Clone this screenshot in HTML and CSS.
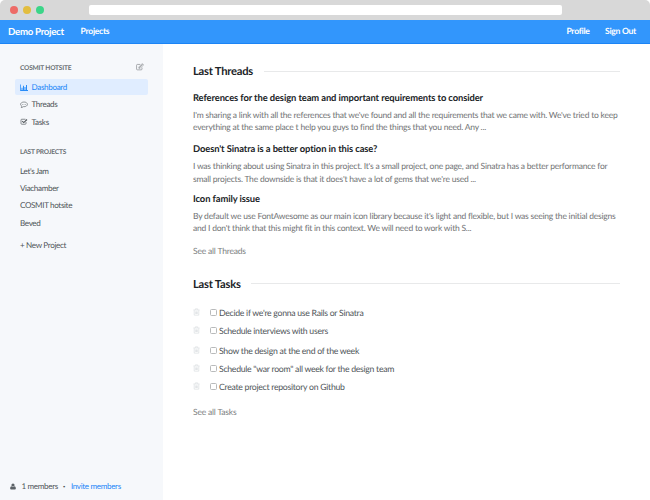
FILE: index.html
```html
<!DOCTYPE html>
<html lang="en">
<head>
<meta charset="utf-8">
<title>Demo Project</title>
<link rel="stylesheet" href="styles.css">
</head>
<body>
<div class="window">
  <div class="chrome">
    <i class="dot red"></i><i class="dot yellow"></i><i class="dot green"></i>
    <div class="address"></div>
  </div>
  <header class="topbar">
    <a class="brand">Demo Project</a>
    <a class="nav-link">Projects</a>
    <a class="nav-link push">Profile</a>
    <a class="nav-link signout">Sign Out</a>
  </header>
  <div class="body">
    <aside class="sidebar">
      <div class="side-head"><h3>COSMIT HOTSITE</h3>
        <svg class="edit" viewBox="0 0 14 14"><path d="M10.5 8v2.5a1.5 1.5 0 0 1-1.5 1.5H2.5A1.5 1.5 0 0 1 1 10.500V4a1.500 1.500 0 0 1 1.500-1.500H7.500M5.500 8.500L11.800 2.200" fill="none" stroke="currentColor" stroke-width="1.200"/><path d="M5 9.300V7L11 1l2.300 2.300-6 6z" fill="none" stroke="currentColor"/></svg>
      </div>
      <ul class="menu">
        <li class="active"><svg viewBox="0 0 16 14"><path d="M.5 1v12H16M4 12V7.500M7 12V3.500M10 12V6M13 12V2" fill="none" stroke="currentColor" stroke-width="1.900"/></svg>Dashboard</li>
        <li><svg viewBox="0 0 16 14"><path d="M8 2c3.900 0 6.800 2 6.800 4.700S11.900 11.400 8 11.400l-1.200-.1C5.500 12.500 4 13 2.500 13.200c.8-.8 1.200-1.600 1.300-2.600C2.200 9.800 1.200 8.400 1.200 6.700 1.200 4 4.100 2 8 2z" fill="none" stroke="currentColor" stroke-width="1.200"/><circle cx="5" cy="6.700" r=".9" fill="currentColor"/><circle cx="8" cy="6.700" r=".9" fill="currentColor"/><circle cx="11" cy="6.700" r=".9" fill="currentColor"/></svg>Threads</li>
        <li><svg viewBox="0 0 16 14"><path d="M12 8v3a1.500 1.500 0 0 1-1.500 1.500H3.500A1.500 1.500 0 0 1 2 11V4a1.500 1.500 0 0 1 1.500-1.500H11" fill="none" stroke="currentColor" stroke-width="1.300"/><path d="M4.500 6.200l3 3L14 3" fill="none" stroke="currentColor" stroke-width="2.200"/></svg>Tasks</li>
      </ul>
      <h3 class="projects-title">LAST PROJECTS</h3>
      <ul class="projects">
        <li>Let's Jam</li><li>Viachamber</li><li>COSMIT hotsite</li><li>Beved</li>
      </ul>
      <a class="new-project">+ New Project</a>
      <footer class="members">
        <svg viewBox="0 0 12 14"><circle cx="6" cy="4" r="3.200"/><path d="M3 6.500C1 7 .3 9 .3 11c0 1.300.7 2 1.900 2h7.600c1.200 0 1.900-.7 1.900-2 0-2-.7-4-2.700-4.500-1.600 1.600-4.400 1.600-6 0z"/></svg>
        <span>1 members</span><span class="sep">·</span><a>Invite members</a>
      </footer>
    </aside>
    <main class="content">
      <h2>Last Threads</h2>
      <article class="thread t1"><h4>References for the design team and important requirements to consider</h4>
        <p>I'm sharing a link with all the references that we've found and all the requirements that we came with. We've tried to keep<br>everything at the same place t help you guys to find the things that you need. Any ...</p></article>
      <article class="thread t2"><h4>Doesn't Sinatra is a better option in this case?</h4>
        <p>I was thinking about using Sinatra in this project. It's a small project, one page, and Sinatra has a better performance for<br>small projects. The downside is that it does't have a lot of gems that we're used ...</p></article>
      <article class="thread t3"><h4>Icon family issue</h4>
        <p>By default we use FontAwesome as our main icon library because it's light and flexible, but I was seeing the initial designs<br>and I don't think that this might fit in this context. We will need to work with S...</p></article>
      <a class="see-all">See all Threads</a>
      <h2 class="tasks-title">Last Tasks</h2>
      <ul class="tasks">
        <li><svg viewBox="0 0 12 14"><path d="M.5 3.500h11M4 3V1.500h4V3M2 4v8.500h8V4M4.500 6v4.500M6 6v4.500M7.500 6v4.500"/></svg><i class="box"></i>Decide if we're gonna use Rails or Sinatra</li>
        <li class="gap"><svg viewBox="0 0 12 14"><path d="M.5 3.500h11M4 3V1.500h4V3M2 4v8.500h8V4M4.500 6v4.500M6 6v4.500M7.500 6v4.500"/></svg><i class="box"></i>Schedule interviews with users</li>
        <li><svg viewBox="0 0 12 14"><path d="M.5 3.500h11M4 3V1.500h4V3M2 4v8.500h8V4M4.500 6v4.500M6 6v4.500M7.500 6v4.500"/></svg><i class="box"></i>Show the design at the end of the week</li>
        <li><svg viewBox="0 0 12 14"><path d="M.5 3.500h11M4 3V1.500h4V3M2 4v8.500h8V4M4.500 6v4.500M6 6v4.500M7.500 6v4.500"/></svg><i class="box"></i>Schedule "war room" all week for the design team</li>
        <li><svg viewBox="0 0 12 14"><path d="M.5 3.500h11M4 3V1.500h4V3M2 4v8.500h8V4M4.500 6v4.500M6 6v4.500M7.500 6v4.500"/></svg><i class="box"></i>Create project repository on Github</li>
      </ul>
      <a class="see-all">See all Tasks</a>
    </main>
  </div>
</div>
</body>
</html>
```
FILE: styles.css
```css
* { box-sizing: border-box; margin: 0; padding: 0; }
body { width: 650px; height: 500px; overflow: hidden; background: #fff; font-family: Lato, sans-serif; font-size: 8.100px; letter-spacing: -0.34px; color: #4f5559; text-rendering: geometricPrecision; }
ul { list-style: none; }
svg { display: block; flex: none; }
.window { height: 500px; display: flex; flex-direction: column; }
.chrome { height: 20px; flex: none; background: #d8d8d8; border-radius: 5px 5px 0 0; display: flex; align-items: center; padding-left: 10px; gap: 5px; }
.dot { width: 8px; height: 8px; border-radius: 50%; }
.red { background: #ed6b67; }
.yellow { background: #e2bd3f; }
.green { background: #3bd588; }
.address { width: 473px; height: 10px; margin-left: 40px; background: #fff; border-radius: 2px; }
.topbar { height: 24px; flex: none; background: #3296fc; border-bottom: 1px solid #1b84f5; display: flex; align-items: center; padding: 0 14px 0 8px; color: #fff; line-height: 12px; }
.brand { font-size: 9.700px; font-weight: 700; width: 72.500px; white-space: nowrap; letter-spacing: -0.3px; }
.nav-link { font-size: 8.600px; font-weight: 700; letter-spacing: -0.29px; padding-bottom: 1px; }
.push { margin-left: auto; }
.signout { margin-left: 15.500px; }
.body { flex: 1; display: flex; min-height: 0; }
.sidebar { width: 162.500px; background: #f6f8fb; padding: 16.500px 15px 0; display: flex; flex-direction: column; }
.side-head { display: flex; justify-content: space-between; height: 15px; padding: 0 4px 0 5px; align-items: center; }
h3 { font-size: 6.600px; font-weight: 700; line-height: 10px; color: #6b7175; letter-spacing: -0.21px; padding-top: .5px; }
.edit { width: 8px; height: 8px; color: #85898c; margin-top: -3px; }
.menu { margin-top: 3.500px; }
.menu li { height: 17.400px; padding-left: 5px; display: flex; align-items: center; border-radius: 2px; }
.menu svg { width: 8px; height: 7px; margin-right: 3.500px; }
.menu .active { background: #e0edff; color: #1e87f8; height: 16px; margin-bottom: .5px; }
.projects-title { margin: 16px 0 0 5px; }
.projects { margin: 6px 0 0 5px; }
.projects li { line-height: 17.300px; letter-spacing: -0.36px; }
.new-project { margin: 7px 0 0 5px; line-height: 12px; }
.members { margin: auto 0 8px -5px; height: 12px; display: flex; align-items: center; font-size: 8px; letter-spacing: -0.3px; }
.members svg { width: 6px; height: 7px; fill: #5c6267; margin-right: 5.500px; }
.sep { margin: 0 6px 0 5px; font-weight: 900; }
.members a { color: #1e87f8; }
.content { flex: 1; padding: 20px 30px 0 30.500px; }
h2 { display: flex; align-items: center; height: 16px; font-size: 11.200px; letter-spacing: -0.23px; font-weight: 700; line-height: 16px; color: #202326; }
h2::after { content: ""; flex: 1; height: 1px; margin: -2px 0 0 10.500px; background: #e8e9ea; }
h4 { font-size: 9.400px; letter-spacing: -0.1px; line-height: 12px; font-weight: 700; color: #202326; white-space: nowrap; }
.thread p { font-size: 8.500px; letter-spacing: -0.215px; line-height: 12.800px; color: #707274; white-space: nowrap; margin-top: 4px; }
.t1 { margin-top: 12.500px; }
.t2 { margin-top: 10px; }
.t2 p { margin-top: 4px; }
.t3 { margin-top: 8.500px; }
.t3 p { margin-top: 3.500px; line-height: 12.600px; }
.see-all { display: block; margin-top: 10.500px; line-height: 12px; color: #7b7e80; font-size: 8.500px; letter-spacing: -0.19px; }
.tasks-title { margin-top: 19.500px; }
.tasks { margin-top: 10.500px; font-size: 8.700px; letter-spacing: -0.28px; }
.tasks li { height: 18px; display: flex; align-items: center; }
.tasks .gap { margin-bottom: 2px; }
.tasks svg { width: 7px; height: 8px; margin: 0 10px 0 0; fill: none; stroke: #d9dde0; stroke-width: 1.200; }
.box { width: 7px; height: 7px; border: 1px solid #b8babb; border-radius: 1.500px; margin-right: 2px; }
```
